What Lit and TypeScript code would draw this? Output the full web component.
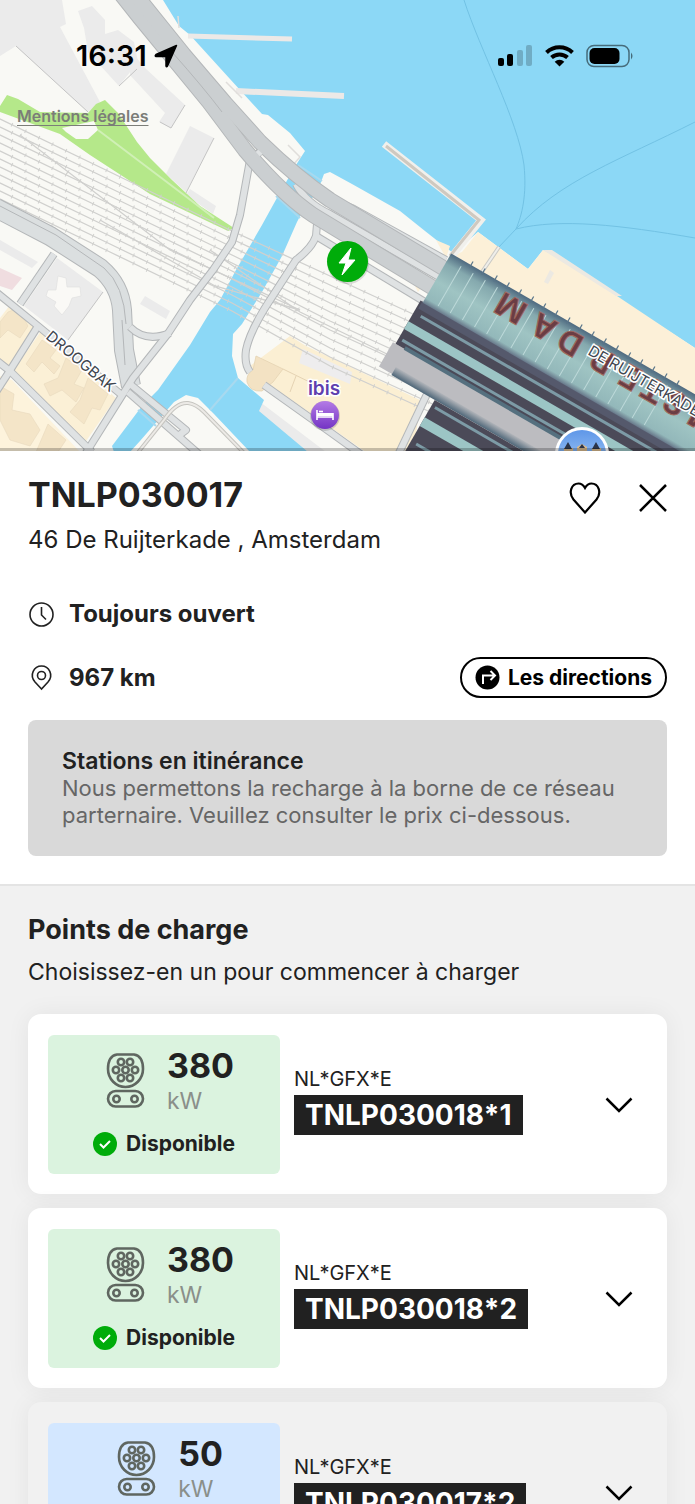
import { html, css, svg, LitElement } from 'lit';
import { customElement, property } from 'lit/decorators.js';
import { classMap } from 'lit/directives/class-map.js';

interface ChargePoint {
  power: number;
  prefix: string;
  code: string;
  status: 'free' | 'busy';
}

const POINTS: ChargePoint[] = [
  { power: 380, prefix: 'NL*GFX*E', code: 'TNLP030018*1', status: 'free' },
  { power: 380, prefix: 'NL*GFX*E', code: 'TNLP030018*2', status: 'free' },
  { power: 50, prefix: 'NL*GFX*E', code: 'TNLP030017*2', status: 'busy' },
];

const MINOR_ROADS = [
  'M250 160 L240 215 L232 242 L213 270 L190 300 L167 335 L133 378 L84 456',
  'M-4 292 L38 326 L123 396',
  'M54 254 L20 304',
  'M38 326 L9 372 L-4 392',
  'M-4 360 L10 371 L92 452',
  'M130 384 L186 430 L178 436',
  'M128 392 L208 462',
  'M130 327 Q146 343 170 333',
  'M317 224 L316 236 Q312 248 296 260 L272 297 Q250 330 246 350 Q244 364 250 372',
  'M316 236 L425 302',
  'M264 385 L330 432 L362 455',
  'M428 392 L398 455',
];

const BUILDINGS = [
  'M0 0 H62 L66 24 L60 27 L100 102 L88 112 L16 46 L0 56 Z',
  'M78 11 L92 6 L105 20 L105 34 L118 30 L134 42 L138 62 L119 86 L88 52 L84 28 Z',
  'M130 50 L145 68 L185 105 L171 128 L159 122 L165 113 L130 75 Z',
  'M190 126 L214 138 L186 192 L166 174 Z',
  'M190 189 L216 206 L213 214 L186 195 Z',
  'M57 258 L103 292 L68 340 L24 306 Z',
  'M145 296 L170 311 L166 319 L140 304 Z',
  'M0 240 L38 262 L32 268 L0 250 Z',
  'M260 402 L330 455 L296 455 L256 410 Z',
];

// Tracks fan out to the east, with a few switches between them.
const TRACKS = Array.from({ length: 11 }, (_, i) => {
  const west = 118 + i * 8;
  return `M-2 ${west} L110 ${172 + i * 8} L232 ${231 + i * 8} L330 ${276 + i * 9} L450 ${331 + i * 9}`;
}).concat([
  'M20 135 L170 250 L300 310',
  'M100 220 L215 286 L300 310',
  'M210 250 L300 312 L420 370',
]);

@customElement('area-map')
export class AreaMap extends LitElement {
  static styles = css`
    :host {
      display: block;
    }

    .canvas {
      display: block;
      width: 100%;
      font-family: 'Inter', sans-serif;
    }

    .water {
      fill: #8cd8f6;
    }

    .building {
      fill: #ebebeb;
    }

    .casing {
      fill: none;
      stroke: #b4b7b9;
      stroke-linejoin: round;
    }

    .road {
      fill: none;
      stroke: #dfe2e3;
      stroke-linejoin: round;
    }

    .highway {
      stroke: #cbcfd1;
    }

    .track {
      fill: none;
      stroke: #d0d0ce;
      stroke-width: 1.3;
    }

    .sleepers {
      fill: none;
      stroke: #d0d0ce;
      stroke-width: 4;
      stroke-dasharray: 1 14;
    }

    .ferry {
      fill: none;
      stroke: #72c2e4;
      stroke-width: 1;
    }

    .street {
      font-size: 15px;
      fill: #40464f;
      stroke: #fff;
      stroke-width: 3px;
      paint-order: stroke;
    }

    .hotel {
      font-size: 19px;
      font-weight: 600;
      fill: #5f3fae;
      stroke: #fff;
      stroke-width: 3px;
      paint-order: stroke;
    }

    .roof-name {
      font-size: 32px;
      font-weight: 700;
      fill: #6b3d44;
      stroke: #a0685f;
      stroke-width: 1px;
    }
  `;

  private minorRoads() {
    return svg`
      ${MINOR_ROADS.map((d) => svg`<path class="casing" stroke-width="8" d=${d} />`)}
      ${MINOR_ROADS.map((d) => svg`<path class="road" stroke-width="6" d=${d} />`)}
    `;
  }

  private highway() {
    const north = 'M135 -6 L184 55 L225 103 L260 142 Q296 177 330 200 L450 272';
    const south = 'M121 -6 L140 18 L209 102 L245 150 Q282 194 313 215 L440 292';
    const ramp = 'M296 184 Q306 203 330 214 L446 281';
    const slip = 'M336 206 Q344 204 352 208 L446 260';
    return svg`
      <path class="casing" stroke-width="8" d=${slip} />
      <path class="road" stroke-width="6" d=${slip} />
      <path class="casing" stroke-width="8" d=${ramp} />
      <path class="road" stroke-width="6" d=${ramp} />
      <path class="casing" stroke-width="8" d="M256 155 L263 149" />
      <path class="casing" stroke-width="16" d=${south} />
      <path class="casing" stroke-width="16" d=${north} />
      <path class="road" stroke-width="6" d="M252 159 L266 147" />
      <path class="road highway" stroke-width="14" d=${south} />
      <path class="road highway" stroke-width="14" d=${north} />
      <path class="casing" stroke-width="1" d="M172 52 Q204 88 222 112" />
    `;
  }

  private blocks() {
    return svg`
      <path fill="#fbf0d6" d="M10 305 L36 326 L10 366 L0 360 V318 Z" />
      <path fill="#fbf0d6" d="M41 331 L116 398 L84 444 L14 370 Z" />
      <path fill="#fdf3dc" d="M0 376 L12 380 L80 452 H0 Z" />
      <g fill="#f4e5c8" stroke="#e8d9bd" stroke-width="0.6">
        <path d="M8 312 L18 308 L28 326 L20 338 L8 330 L0 338 V322 Z" />
        <path d="M42 340 L56 350 L50 358 L60 366 L54 374 L42 362 L34 372 L26 364 Z" />
        <path d="M66 358 L82 370 L74 384 L84 388 L76 402 L62 390 L50 396 L44 384 L58 378 Z" />
        <path d="M88 378 L108 394 L100 410 L92 408 L84 424 L70 412 L80 400 Z" />
        <path d="M0 386 L14 394 L12 410 L30 414 L40 430 L30 446 L10 440 L0 420 Z" />
        <path d="M48 424 L66 440 L58 452 H36 Z" />
      </g>
      <path fill="#f0dde0" d="M0 268 L22 278 L12 290 L0 286 Z" />
      <path
        fill="#faf9f6"
        stroke="#dedede"
        stroke-width="0.6"
        d="M58 276 L66 278 L67 287 L80 287 L81 296 L72 298 L69 306 L62 315 L54 306 L56 302 L46 296 L48 290 L56 290 Z"
      />
      <path fill="#fbefd3" d="M250 366 L290 336 L306 346 L420 400 L414 455 H370 L266 382 Z" />
      <path
        fill="#f3e2c3"
        stroke="#e5d3b3"
        stroke-width="0.8"
        d="M256 356 L283 369 L273 382 L262 391 Q250 392 247 382 Q246 374 253 370 Z"
      />
      <path fill="none" stroke="#e5d3b3" d="M283 369 L330 392 M296 376 L290 392" />
      <path fill="#eeedee" d="M303 349 L352 372 L350 384 L299 363 Z" />
      <path fill="#fcf0d8" d="M410 276 L424 284 L418 292 Z M436 240 L450 246 L446 258 Z" />
    `;
  }

  // Drawn in its own axes: x runs along the platforms, y across them.
  private station() {
    const ribs = Array.from({ length: 18 }, (_, i) => i * 14 + 14);
    return svg`
      <g transform="translate(452 254) rotate(30)">
        <rect x="-7" y="106" width="400" height="28" fill="#bcbcc0" />
        <rect x="8" y="126" width="400" height="9" fill="url(#slab)" />
        <rect x="-4" y="56" width="400" height="50" fill="#4b4a58" />
        <rect x="-2" y="56" width="400" height="8" fill="#55596c" />
        <rect x="4" y="68" width="400" height="3" fill="#7d9ba6" />
        <rect x="-4" y="80" width="400" height="9" fill="#9cc5c5" />
        <rect x="0" y="98" width="400" height="3" fill="#7d9ba6" />
        <rect x="6" y="103" width="400" height="4" fill="#55707f" />
        <rect x="58" y="135" width="400" height="90" fill="#4b4a58" />
        <rect x="62" y="140" width="400" height="3" fill="#7d9ba6" />
        <rect x="58" y="155" width="400" height="10" fill="#9cc5c5" />
        <rect x="64" y="181" width="400" height="3" fill="#7d9ba6" />
        <rect x="-1" y="0" width="400" height="57" fill="url(#roof)" />
        ${ribs.map((x) => svg`<path stroke="#bdd9d9" stroke-width="1" d="M${x} 6 V52" />`)}
        ${ribs.map((x) => svg`<path stroke="#59758a" stroke-width="1.2" d="M${x + 8} -4 V3" />`)}
        <text
          class="roof-name"
          transform="translate(64 6) rotate(180)"
          x="-286 -252 -214 -189 -162 -130 -94 -64 -29"
        >AMSTERDAM</text>
      </g>
    `;
  }

  render() {
    return html`
      <svg class="canvas" viewBox="0 0 695 451" role="img" aria-label="Plan du quartier">
        <defs>
          <linearGradient id="roof" x1="0" y1="0" x2="0" y2="1">
            <stop offset="0" stop-color="#4f6a80" />
            <stop offset="0.2" stop-color="#85a9ae" />
            <stop offset="0.55" stop-color="#9fc4c3" />
            <stop offset="0.9" stop-color="#93b8ba" />
            <stop offset="1" stop-color="#68788a" />
          </linearGradient>
          <linearGradient id="slab" x1="0" y1="0" x2="0" y2="1">
            <stop offset="0" stop-color="#b2b5ba" />
            <stop offset="1" stop-color="#4e6678" />
          </linearGradient>
          <linearGradient id="hotel" x1="0" y1="0" x2="0" y2="1">
            <stop offset="0" stop-color="#b47be6" />
            <stop offset="1" stop-color="#7434c4" />
          </linearGradient>
          <linearGradient id="sky" x1="0" y1="0" x2="0" y2="1">
            <stop offset="0" stop-color="#5f97e8" />
            <stop offset="1" stop-color="#b4d6fa" />
          </linearGradient>
        </defs>

        <rect width="695" height="451" fill="#f9f9f5" />
        ${BUILDINGS.map((d) => svg`<path class="building" d=${d} />`)}
        <path fill="none" stroke="#c4c4c4" d="M16 46 L88 112 M119 86 L137 69 M185 105 L171 128 L160 122 M214 138 L186 193 M103 292 L68 340" />
        <path
          fill="#b5e88a"
          d="M0 106 L7 95 L18 99 L40 112 L88 113 L96 104 L105 100 L118 113 L137 142 L150 158 L172 180 L200 206 L234 228 L228 231 L150 194 L90 155 L60 134 L0 112 Z"
        />
        <path fill="#f9f9f5" d="M62 128 L94 121 L98 130 L88 139 L76 139 L66 132 Z" />
        <path fill="none" stroke="#d0f0b6" stroke-width="2" d="M98 130 L180 192 L214 218" />

        <path
          class="water"
          d="M163 0 L179 26 L190 35 L230 79 L262 114 L268 115 L290 133 L305 151 L296 165 L278 196 L262 225 L236 270 L220 300 L210 312 L190 345 L158 390 L142 406 L112 446 L114 452 H130 L140 441 L160 418 L174 402 L186 395 L198 398 L214 414 L250 452 H308 L259 411 L264 400 L238 378 L232 356 L233 334 L242 324 L262 292 L282 256 L297 222 L302 212 L318 190 L324 174 L330 172 L352 184 L400 211 L425 231 L453 253 L478 232 L528 269 L543 250 L695 348 V0 Z"
        />
        <path fill="#fcf0d8" d="M462 252 L478 232 L528 269 L543 250 L560 258 L695 348 V396 L452 256 Z" />
        <path fill="#ece9e2" d="M543 250 L552 250 L622 296 L616 296 Z M544 282 L550 270 L554 273 L548 284 Z" />
        <path fill="none" stroke="#a8d9ef" stroke-width="2" d="M238 378 L210 410 M138 410 L156 426 M298 165 L322 181 M276 196 L300 218" />
        <path
          class="ferry"
          d="M464 0 C480 50 518 120 524 165 C527 195 522 215 516 229 M516 229 C560 180 620 160 695 122 M516 229 C560 218 620 225 695 238 M516 229 L498 248"
        />
        <path fill="none" stroke="#c9c8c4" stroke-width="4" d="M499 247 L482 272" />
        <path fill="none" stroke="#efeeea" stroke-width="2" d="M499 247 L482 272" />

        <path fill="none" stroke="#ece9e7" stroke-width="5" d="M188 36 L292 39" />
        <path fill="none" stroke="#ece9e7" stroke-width="6" d="M236 91 L344 96" />
        <path fill="none" stroke="#f1f0ec" stroke-width="7" d="M384 144 L481 220 L452 256" />
        <path fill="none" stroke="#cfc9c0" stroke-width="3" d="M386 146 L479 220 L450 256" />
        <path fill="none" stroke="#e0dedb" stroke-width="1.5" d="M288 145 L300 157 L292 166 M226 82 L242 98 M178 16 L179 28" />

        ${this.blocks()}
        ${TRACKS.map((d) => svg`<path class="track" d=${d} /><path class="sleepers" d=${d} />`)}
        <path fill="none" stroke="#b4b7b9" stroke-width="20" d="M-4 208 L50 236 L100 268 Q120 285 122 310 L124 350 L131 386" />
        <path fill="none" stroke="#dbdfe0" stroke-width="18" d="M-4 208 L50 236 L100 268 Q120 285 122 310 L124 350 L131 386" />
        <path class="casing" stroke-width="1" d="M0 206 L56 235 L104 268 Q124 285 126 324 M122 320 L125 365" />
        ${this.minorRoads()}
        <path fill="none" stroke="#c6c5c0" stroke-width="4" d="M136 455 L164 420 Q176 402 188 403 Q196 404 204 412 L246 455" />
        <path fill="none" stroke="#eceae6" stroke-width="2" d="M136 455 L164 420 Q176 402 188 403 Q196 404 204 412 L246 455" />
        ${this.highway()}
        ${this.station()}

        <text class="street" transform="translate(45 338) rotate(40)">DROOGBAK</text>
        <text class="street" transform="translate(587 354) rotate(30)">DE RUIJTERKADE</text>

        <circle cx="348" cy="263" r="21" fill="#000" opacity="0.12" />
        <circle cx="347.500" cy="261.500" r="20.500" fill="#00ac0a" />
        <path fill="#fff" d="M351 248 L339 263 H346 L342 275 L355 260 H348 Z" stroke="#fff" stroke-linejoin="round" />

        <text class="hotel" x="324" y="395" text-anchor="middle">ibis</text>
        <circle cx="325" cy="416" r="15" fill="#000" opacity="0.15" />
        <circle cx="325" cy="415" r="14" fill="url(#hotel)" />
        <g fill="none" stroke="#fff" stroke-width="1.6">
          <path d="M317 410 V420 M317 417 H333 M333 420 V413" />
          <path d="M317 414.500 H333" stroke-width="3" />
          <path d="M319 411.500 H323" />
        </g>

        <circle cx="582" cy="454" r="27" fill="#fff" />
        <circle cx="582" cy="454" r="24" fill="url(#sky)" />
        <path fill="#d8b98c" d="M564 451 V448 H573 V451 Z M577 451 V447 L582 444 L587 447 V451 Z M592 451 V448 H601 V451 Z" />
        <path fill="#2b3448" d="M564 449 L568 442 L572 449 Z M592 449 L596 442 L600 449 Z M579 448 L582 444 L585 448 Z" />
        <rect y="448" width="695" height="3" fill="#000" opacity="0.22" />
      </svg>
    `;
  }
}

@customElement('phone-status')
export class PhoneStatus extends LitElement {
  static styles = css`
    :host {
      display: flex;
      justify-content: space-between;
      align-items: center;
      padding: 40px 61px 0 76px;
      font-family: 'Inter', sans-serif;
      color: #000;
    }

    .clock {
      display: flex;
      align-items: center;
      gap: 7px;
      font-size: 29px;
      line-height: 32px;
      font-weight: 600;
    }

    .signals {
      display: flex;
      align-items: center;
      gap: 12px;
    }
  `;

  render() {
    return html`
      <div class="clock">
        <span>16:31</span>
        <svg width="24" height="24" viewBox="0 0 24 24" aria-hidden="true">
          <path
            d="M22.500 1.500 L13.500 22 Q12.500 23.500 12 22 V12.500 H2 Q0.500 12 2 10.500 Z"
            stroke="#000"
            stroke-width="1.500"
            stroke-linejoin="round"
          />
        </svg>
      </div>
      <div class="signals">
        <svg width="35" height="24" viewBox="0 0 35 24" aria-hidden="true">
          <rect x="0" y="14" width="6" height="8" rx="2" />
          <rect x="9" y="10" width="6" height="12" rx="2" />
          <rect x="19" y="6" width="6" height="16" rx="2" opacity="0.2" />
          <rect x="28" y="1" width="6" height="21" rx="2" opacity="0.2" />
        </svg>
        <svg width="29" height="24" viewBox="0 0 29 24" aria-hidden="true">
          <g fill="none" stroke="#000" stroke-width="4">
            <path d="M1.500 8.500 A19 19 0 0 1 27.500 8.500" />
            <path d="M6.500 13.500 A12 12 0 0 1 22.500 13.500" />
          </g>
          <path d="M14.500 22.500 L9.700 17.700 A7 7 0 0 1 19.300 17.700 Z" />
        </svg>
        <svg width="48" height="24" viewBox="0 0 48 24" aria-hidden="true">
          <rect x="1" y="1.500" width="42" height="21" rx="7" fill="none" stroke="#000" stroke-width="1.500" opacity="0.5" />
          <rect x="3.500" y="4" width="30" height="16" rx="5" />
          <path d="M45 8.500 Q48 12 45 15.500 Z" opacity="0.5" />
        </svg>
      </div>
    `;
  }
}

@customElement('charge-card')
export class ChargeCard extends LitElement {
  static styles = css`
    :host {
      display: block;
      font-family: 'Inter', sans-serif;
      color: #212121;
    }

    .card {
      display: flex;
      align-items: center;
      gap: 14px;
      padding: 21px 34px 20px 20px;
      border-radius: 13px;
      background: #fff;
      box-shadow: 0 0 24px rgba(0, 0, 0, 0.06);
    }

    .card.busy {
      background: #f1f1f1;
    }

    .panel {
      display: flex;
      flex-direction: column;
      align-items: center;
      gap: 13px;
      box-sizing: border-box;
      width: 232px;
      padding: 13px 0 18px;
      border-radius: 6px;
      background: #dbf3df;
    }

    .busy .panel {
      background: #d3e7ff;
    }

    .power {
      display: flex;
      gap: 22px;
      padding: 5px 0 0 12px;
    }

    .figure {
      display: flex;
      flex-direction: column;
      margin-top: -5px;
    }

    .value {
      font-size: 34px;
      line-height: 36px;
      font-weight: 700;
    }

    .unit {
      font-size: 23px;
      line-height: 35px;
      color: #8a8f8a;
    }

    .status {
      display: flex;
      align-items: center;
      gap: 9px;
      font-size: 21px;
      line-height: 24px;
      font-weight: 700;
    }

    .label {
      display: flex;
      flex: 1;
      flex-direction: column;
      align-items: flex-start;
      gap: 3px;
      padding-bottom: 8px;
      font-variant-ligatures: no-contextual;
    }

    .prefix {
      font-size: 20px;
      line-height: 26px;
    }

    .code {
      padding: 4px 11px;
      font-size: 28px;
      line-height: 32px;
      font-weight: 700;
      color: #fff;
      background: #212121;
    }

    .toggle {
      display: flex;
      padding: 0;
      border: 0;
      background: none;
      cursor: pointer;
    }
  `;

  @property({ attribute: false }) point!: ChargePoint;

  private plug() {
    const pins = [
      [15, 9], [24, 9], [10, 17], [19.5, 17], [29, 17], [15, 25], [24, 25], [10.5, 46], [28.5, 46],
    ];
    return html`
      <svg width="39" height="55" viewBox="0 0 39 55" fill="none" stroke="#5f6660" stroke-width="2.600" aria-hidden="true">
        <path d="M11 1.500 H28 Q37 3 37 16 C37 26 29 34 19.500 34 C10 34 2 26 2 16 Q2 3 11 1.500 Z" />
        <rect x="2" y="38" width="35" height="15.500" rx="7.700" />
        ${pins.map(([x, y]) => svg`<circle cx=${x} cy=${y} r="3.2" />`)}
      </svg>
    `;
  }

  render() {
    const { power, prefix, code, status } = this.point;
    const free = status === 'free';
    return html`
      <article class="card ${classMap({ busy: !free })}">
        <div class="panel">
          <div class="power">
            ${this.plug()}
            <div class="figure">
              <span class="value">${power}</span>
              <span class="unit">kW</span>
            </div>
          </div>
          <div class="status">
            <svg width="24" height="24" viewBox="0 0 24 24" aria-hidden="true">
              <circle cx="12" cy="12" r="12" fill=${free ? '#00ac0a' : '#1a73e8'} />
              <path d="M7 12 L10.500 15.500 L17 9" fill="none" stroke="#fff" stroke-width="2" />
            </svg>
            <span>${free ? 'Disponible' : 'Occupé'}</span>
          </div>
        </div>
        <div class="label">
          <span class="prefix">${prefix}</span>
          <strong class="code">${code}</strong>
        </div>
        <button class="toggle" aria-label="Afficher ${code}">
          <svg width="28" height="16" viewBox="0 0 28 16" aria-hidden="true">
            <path d="M1.500 1.500 L14 14 L26.500 1.500" fill="none" stroke="#000" stroke-width="2.500" />
          </svg>
        </button>
      </article>
    `;
  }
}

@customElement('app-root')
export class AppRoot extends LitElement {
  static styles = css`
    :host {
      display: block;
      height: 100vh;
      overflow: hidden;
      font-family: 'Inter', sans-serif;
      color: #212121;
      background: #f1f1f1;
    }

    h1,
    h2,
    h3,
    p {
      margin: 0;
    }

    button {
      padding: 0;
      border: 0;
      background: none;
      font: inherit;
      cursor: pointer;
    }

    .top {
      position: relative;
    }

    .overlay {
      position: absolute;
      top: 0;
      left: 0;
      right: 0;
    }

    .legal {
      display: inline-block;
      margin: 34px 0 0 17px;
      font-size: 16px;
      line-height: 20px;
      font-weight: 600;
      color: #7b7d78;
      text-underline-offset: 3px;
    }

    .station {
      padding: 24px 28px 28px;
      background: #fff;
      border-bottom: 2px solid #e4e4e4;
    }

    .heading {
      display: flex;
      justify-content: space-between;
      align-items: center;
    }

    .heading h1 {
      font-size: 34px;
      line-height: 40px;
      font-weight: 700;
    }

    .actions {
      display: flex;
      align-items: center;
      gap: 38px;
      padding-top: 6px;
    }

    .actions button,
    .directions {
      display: flex;
      align-items: center;
    }

    .address {
      margin-top: 9px;
      font-size: 24px;
      line-height: 32px;
    }

    .fact {
      display: flex;
      align-items: center;
      gap: 14px;
      font-size: 24px;
      line-height: 32px;
      font-weight: 700;
    }

    .hours {
      margin-top: 42px;
    }

    .row {
      display: flex;
      justify-content: space-between;
      align-items: center;
      margin-top: 27px;
    }

    .row .directions {
      gap: 8px;
      padding: 4px 13px;
      border: 2px solid #000;
      border-radius: 21px;
      font-size: 21px;
      line-height: 29px;
      font-weight: 700;
      color: #000;
    }

    .notice {
      margin-top: 22px;
      padding: 27px 34px;
      border-radius: 8px;
      background: #d9d9d9;
      font-size: 22px;
      line-height: 27px;
      color: #666;
    }

    .notice h3 {
      font-size: 23px;
      line-height: 28px;
      font-weight: 600;
      color: #212121;
    }

    .points {
      padding: 28px;
    }

    .points h2 {
      font-size: 27px;
      line-height: 32px;
      font-weight: 700;
    }

    .points p {
      margin-top: 10px;
      font-size: 23px;
      line-height: 32px;
    }

    .list {
      display: flex;
      flex-direction: column;
      gap: 14px;
      margin-top: 26px;
    }
  `;

  render() {
    return html`
      <header class="top">
        <area-map></area-map>
        <div class="overlay">
          <phone-status></phone-status>
          <a class="legal" href="#legal">Mentions légales</a>
        </div>
      </header>
      <main>
        <section class="station">
          <div class="heading">
            <h1>TNLP030017</h1>
            <div class="actions">
              <button aria-label="Ajouter aux favoris">
                <svg width="32" height="32" viewBox="0 0 32 32" aria-hidden="true">
                  <path
                    d="M16 30.500 L4.500 17.500 C-1 10.500 2.500 1.500 9.500 1.500 Q13.500 1.500 16 6 Q18.500 1.500 22.500 1.500 C29.500 1.500 33 10.500 27.500 17.500 Z"
                    fill="none"
                    stroke="#000"
                    stroke-width="2.200"
                  />
                </svg>
              </button>
              <button aria-label="Fermer">
                <svg width="28" height="28" viewBox="0 0 28 28" aria-hidden="true">
                  <path d="M1 1 L27 27 M27 1 L1 27" stroke="#000" stroke-width="2.500" />
                </svg>
              </button>
            </div>
          </div>
          <p class="address">46 De Ruijterkade , Amsterdam</p>
          <div class="fact hours">
            <svg width="27" height="27" viewBox="0 0 27 27" fill="none" stroke="#212121" stroke-width="1.600" aria-hidden="true">
              <circle cx="13.500" cy="13.500" r="11.500" />
              <path d="M13.500 6 V14 L18 18.500" />
            </svg>
            <span>Toujours ouvert</span>
          </div>
          <div class="row">
            <div class="fact">
              <svg width="27" height="27" viewBox="0 0 27 27" fill="none" stroke="#212121" stroke-width="1.600" aria-hidden="true">
                <path d="M13.500 25 L7 18 C1 11 6 2 13.500 2 C21 2 26 11 20 18 Z" />
                <circle cx="13.500" cy="11.500" r="4" />
              </svg>
              <span>967 km</span>
            </div>
            <button class="directions">
              <svg width="25" height="25" viewBox="0 0 25 25" aria-hidden="true">
                <circle cx="12.500" cy="12.500" r="12" />
                <path d="M8 19 V10.500 H20 M15.500 6 L20 10.500 L15.500 15" fill="none" stroke="#fff" stroke-width="2" />
              </svg>
              <span>Les directions</span>
            </button>
          </div>
          <div class="notice">
            <h3>Stations en itinérance</h3>
            <p>Nous permettons la recharge à la borne de ce réseau parternaire. Veuillez consulter le prix ci-dessous.</p>
          </div>
        </section>
        <section class="points">
          <h2>Points de charge</h2>
          <p>Choisissez-en un pour commencer à charger</p>
          <div class="list">
            ${POINTS.map((point) => html`<charge-card .point=${point}></charge-card>`)}
          </div>
        </section>
      </main>
    `;
  }
}
